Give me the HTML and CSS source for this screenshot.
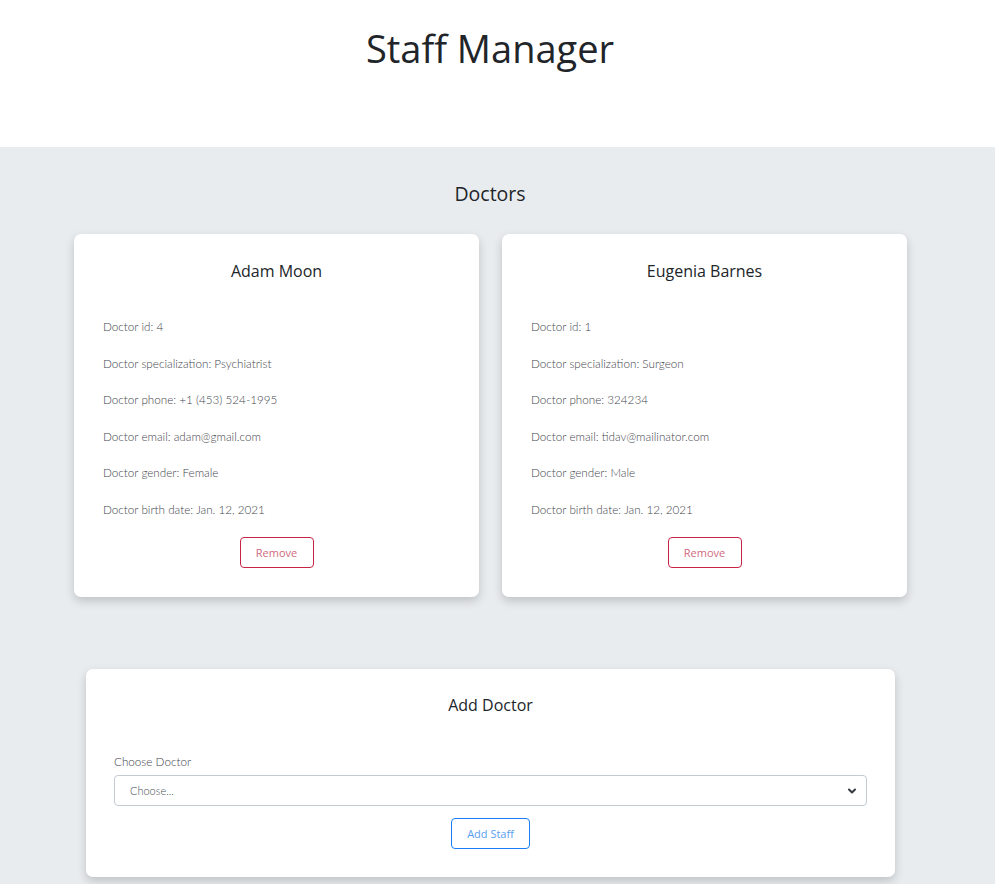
FILE: index.html
```html
<!DOCTYPE html>
<html lang="en">
<head>
<meta charset="utf-8">
<title>Staff Manager</title>
<link rel="stylesheet" href="styles.css">
</head>
<body>
<header class="top">
  <h1 class="title">Staff Manager</h1>
</header>
<main class="main">
  <h2 class="section-title">Doctors</h2>
  <div class="cards">
    <div class="card">
      <h3 class="card-title">Adam Moon</h3>
      <p class="info">Doctor id: 4</p>
      <p class="info">Doctor specialization: Psychiatrist</p>
      <p class="info">Doctor phone: +1 (453) 524-1995</p>
      <p class="info">Doctor email: adam@gmail.com</p>
      <p class="info">Doctor gender: Female</p>
      <p class="info">Doctor birth date: Jan. 12, 2021</p>
      <div class="actions"><button class="btn btn-danger">Remove</button></div>
    </div>
    <div class="card">
      <h3 class="card-title">Eugenia Barnes</h3>
      <p class="info">Doctor id: 1</p>
      <p class="info">Doctor specialization: Surgeon</p>
      <p class="info">Doctor phone: 324234</p>
      <p class="info">Doctor email: tidav@mailinator.com</p>
      <p class="info">Doctor gender: Male</p>
      <p class="info">Doctor birth date: Jan. 12, 2021</p>
      <div class="actions"><button class="btn btn-danger">Remove</button></div>
    </div>
  </div>
  <div class="form-card">
    <h3 class="card-title">Add Doctor</h3>
    <label class="label">Choose Doctor</label>
    <div class="select">
      <span>Choose...</span>
      <svg class="chev" width="12" height="10" viewBox="0 0 12 10"><path d="M3 3.5l3 3 3-3" fill="none" stroke="#343a40" stroke-width="2" stroke-linecap="round" stroke-linejoin="round"/></svg>
    </div>
    <div class="actions"><button class="btn btn-primary">Add Staff</button></div>
  </div>
</main>
</body>
</html>
```
FILE: styles.css
```css
html, body {
  margin: 0;
  padding: 0;
  background: #e9ecef;
}
body {
  font-family: "Lato", "Open Sans", sans-serif;
  color: #212529;
}
.top {
  background: #fff;
  height: 147px;
  display: flex;
  justify-content: center;
  padding-right: 15px;
}
.title {
  margin: 24px 0 0;
  font-family: "Open Sans", sans-serif;
  font-weight: 400;
  font-size: 38px;
  line-height: 48px;
  color: #212529;
}
.main {
  width: 980px;
  padding-top: 33px;
  padding-bottom: 20px;
}
.section-title {
  margin: 0;
  text-align: center;
  font-family: "Open Sans", sans-serif;
  font-weight: 400;
  font-size: 19.5px;
  line-height: 28px;
  color: #212529;
}
.cards {
  display: flex;
  gap: 23px;
  margin: 26px 0 0 74px;
}
.card, .form-card {
  background: #fff;
  border-radius: 7px;
  box-shadow: 0 4px 10px rgba(0,0,0,0.18);
  box-sizing: border-box;
}
.card {
  width: 405px;
  height: 363px;
  padding: 25px 29px 0;
}
.card-title {
  margin: 0 0 34px;
  text-align: center;
  font-family: "Open Sans", sans-serif;
  font-weight: 400;
  font-size: 16px;
  line-height: 24px;
  color: #212529;
}
.info {
  margin: 0 0 18.6px;
  font-size: 11.7px;
  line-height: 18px;
  font-weight: 300;
  color: #3f464d;
}
.actions {
  display: flex;
  justify-content: center;
}
.btn {
  height: 31px;
  background: #fff;
  border-radius: 4px;
  font-family: "Open Sans", sans-serif;
  font-size: 11px;
  font-weight: 400;
  padding: 0 14px;
  cursor: pointer;
}
.btn-danger {
  border: 1px solid #c82346;
  color: #d06a7e;
  width: 74px;
}
.btn-primary {
  border: 1px solid #1a7df5;
  color: #5a9ef0;
  width: 79px;
}
.form-card {
  margin: 72px 0 0 86px;
  width: 809px;
  height: 208px;
  padding: 24px 28px 0;
}
.form-card .card-title {
  margin-bottom: 35px;
}
.label {
  display: block;
  font-size: 11.7px;
  font-weight: 300;
  line-height: 18px;
  color: #3f464d;
  margin-bottom: 5px;
}
.select {
  height: 31px;
  box-sizing: border-box;
  border: 1px solid #c3cad2;
  border-radius: 4px;
  display: flex;
  align-items: center;
  justify-content: space-between;
  padding: 0 8px 0 15px;
  font-size: 11px;
  font-weight: 300;
  color: #495057;
  margin-bottom: 12px;
}
.chev {
  display: block;
}
```
